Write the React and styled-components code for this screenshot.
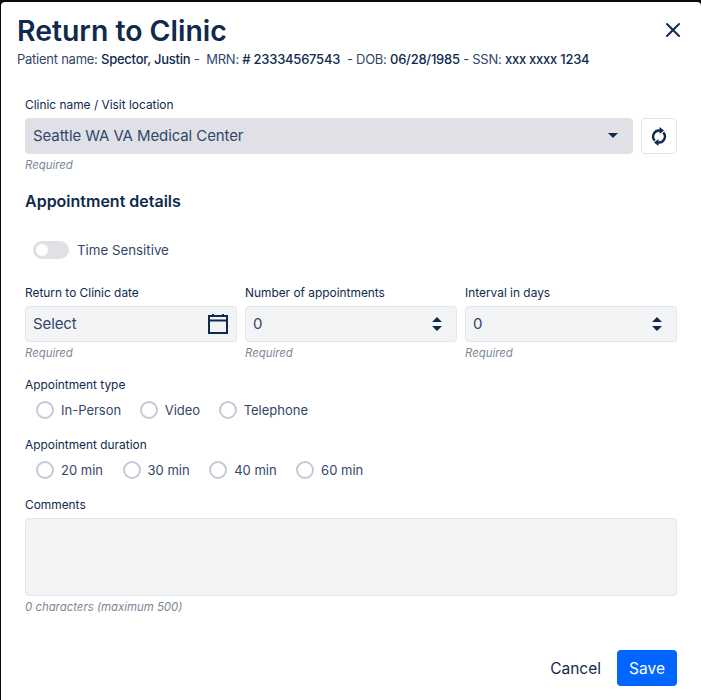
import styled, { createGlobalStyle } from 'styled-components';
import { X } from 'lucide-react';

const colors = {
  navy: '#0f2a4d',
  text: '#33466a',
  muted: '#7b8798',
  field: '#f3f4f6',
  fieldDark: '#dfe1e6',
  border: '#e3e5e9',
  radio: '#c3c9d5',
  blue: '#0066ff',
};

const font = '"Inter", "Liberation Sans", sans-serif';

const GlobalStyle = createGlobalStyle`
  html, body {
    margin: 0;
    padding: 0;
    background: #0a0a0a;
  }
  * {
    box-sizing: border-box;
  }
`;

const Modal = styled.div`
  width: 700px;
  height: 698px;
  margin: 2px 0 0 1px;
  background: #fff;
  border-radius: 4px 4px 0 0;
  padding: 0 24px;
  display: flex;
  flex-direction: column;
  font-family: ${font};
  color: ${colors.text};
  overflow: hidden;
`;

const TitleRow = styled.div`
  display: flex;
  justify-content: space-between;
  align-items: center;
  margin: 12px 0 0 -8px;
  height: 34px;
`;

const Title = styled.h1`
  margin: 0;
  font-size: 28.4px;
  line-height: 34px;
  font-weight: 600;
  color: ${colors.navy};
`;

const CloseButton = styled.button`
  display: flex;
  border: none;
  background: none;
  padding: 0;
  margin: -2px -8px 0 0;
  color: ${colors.navy};
`;

const PatientLine = styled.p`
  margin: 1px 0 0 -8px;
  font-size: 13px;
  line-height: 20px;
  letter-spacing: -0.25px;
  color: ${colors.text};
  white-space: pre;

  b {
    font-weight: 500;
    color: ${colors.navy};
  }
`;

const Label = styled.label`
  display: block;
  font-size: 11.9px;
  line-height: 16px;
  color: ${colors.navy};
  margin-bottom: 5px;
`;

const Hint = styled.div`
  font-size: 11.4px;
  font-style: italic;
  line-height: 14px;
  margin-top: 4px;
  color: ${colors.muted};
`;

const ClinicBlock = styled.div`
  margin-top: 28px;
`;

const ClinicRow = styled.div`
  display: flex;
  gap: 8px;
`;

const Field = styled.div`
  flex: 1;
  height: 36px;
  display: flex;
  align-items: center;
  justify-content: space-between;
  padding: 0 7px 1px;
  font-size: 15px;
  letter-spacing: -0.1px;
  border-radius: 4px;
  color: ${colors.text};
  background: ${(p) => (p.$dark ? colors.fieldDark : colors.field)};
  border: 1px solid ${(p) => (p.$dark ? colors.fieldDark : colors.border)};
`;

const ArrowSvg = styled.svg`
  margin-right: 7px;
`;

const RefreshButton = styled.button`
  width: 36px;
  height: 36px;
  padding: 0;
  display: flex;
  align-items: center;
  justify-content: center;
  background: #fff;
  border: 1px solid ${colors.border};
  border-radius: 4px;
`;

const Heading = styled.h2`
  margin: 19px 0 0;
  font-size: 16px;
  line-height: 21px;
  font-weight: 600;
  color: ${colors.navy};
`;

const ToggleRow = styled.div`
  display: flex;
  align-items: center;
  gap: 8px;
  margin: 29px 0 0 8px;
  font-size: 13.3px;
  line-height: 18px;
`;

const Toggle = styled.span`
  width: 36px;
  height: 18px;
  border-radius: 9px;
  background: ${colors.fieldDark};
  display: flex;
  align-items: center;
  padding-left: 3px;

  &::before {
    content: '';
    width: 12px;
    height: 12px;
    border-radius: 50%;
    background: #fff;
  }
`;

const Columns = styled.div`
  display: grid;
  grid-template-columns: repeat(3, 1fr);
  gap: 8px;
  margin-top: 26px;
`;

const Group = styled.div`
  margin-top: 17px;
`;

const RadioRow = styled.div`
  display: flex;
  gap: ${(p) => p.$gap}px;
  height: 20px;
  margin: 7px 0 0 11px;
`;

const RadioItem = styled.span`
  display: flex;
  align-items: center;
  gap: 7px;
  font-size: 13px;
  color: ${colors.text};
`;

const RadioCircle = styled.span`
  width: 18px;
  height: 18px;
  border-radius: 50%;
  background: #fff;
  border: 2px solid ${colors.radio};
`;

const TextArea = styled.div`
  height: 78px;
  background: ${colors.field};
  border: 1px solid ${colors.border};
  border-radius: 4px;
`;

const Footer = styled.div`
  display: flex;
  justify-content: flex-end;
  align-items: center;
  gap: 16px;
  margin-top: 36px;
`;

const CancelButton = styled.button`
  border: none;
  background: none;
  padding: 0;
  font-family: ${font};
  font-size: 15.5px;
  color: ${colors.navy};
`;

const SaveButton = styled.button`
  width: 60px;
  height: 36px;
  border: none;
  border-radius: 4px;
  background: ${colors.blue};
  color: #fff;
  font-family: ${font};
  font-size: 15.5px;
`;

function Caret() {
  return (
    <ArrowSvg width="10" height="5" viewBox="0 0 10 5">
      <path d="M0 0h10L5 5z" fill={colors.navy} />
    </ArrowSvg>
  );
}

function Stepper() {
  return (
    <ArrowSvg width="10" height="14" viewBox="0 0 10 14">
      <path d="M5 0l5 5H0zM0 9h10l-5 5z" fill={colors.navy} />
    </ArrowSvg>
  );
}

function CalendarIcon() {
  return (
    <svg width="22" height="22" viewBox="0 0 22 22" fill="none" stroke={colors.navy} strokeWidth="2">
      <rect x="2" y="3" width="18" height="17" />
      <path d="M2 7.500h18M6 1v3M16 1v3" />
    </svg>
  );
}

function RefreshIcon() {
  return (
    <svg width="16" height="21" viewBox="0 0 16 21" fill="none">
      <path d="M3.800 14.700A6 6 0 0 1 9 4.600" stroke={colors.navy} strokeWidth="2.400" />
      <path d="M12.200 6.300A6 6 0 0 1 7 16.400" stroke={colors.navy} strokeWidth="2.400" />
      <path d="M8.500 1L13 4.500L8.500 8zM7.500 13L3 16.500L7.500 20z" fill={colors.navy} />
    </svg>
  );
}

function Radios({ options, gap }) {
  return (
    <RadioRow $gap={gap}>
      {options.map((option) => (
        <RadioItem key={option}>
          <RadioCircle />
          {option}
        </RadioItem>
      ))}
    </RadioRow>
  );
}

export default function App() {
  return (
    <>
      <GlobalStyle />
      <Modal>
        <TitleRow>
          <Title>Return to Clinic</Title>
          <CloseButton>
            <X size={24} />
          </CloseButton>
        </TitleRow>
        <PatientLine>
          Patient name: <b>Spector, Justin</b> -  MRN: <b># 23334567543</b>  - DOB: <b>06/28/1985</b> - SSN: <b>xxx xxxx 1234</b>
        </PatientLine>

        <ClinicBlock>
          <Label>Clinic name / Visit location</Label>
          <ClinicRow>
            <Field $dark>
              Seattle WA VA Medical Center
              <Caret />
            </Field>
            <RefreshButton>
              <RefreshIcon />
            </RefreshButton>
          </ClinicRow>
          <Hint>Required</Hint>
        </ClinicBlock>

        <Heading>Appointment details</Heading>

        <ToggleRow>
          <Toggle />
          Time Sensitive
        </ToggleRow>

        <Columns>
          <div>
            <Label>Return to Clinic date</Label>
            <Field>
              Select
              <CalendarIcon />
            </Field>
            <Hint>Required</Hint>
          </div>
          <div>
            <Label>Number of appointments</Label>
            <Field>
              0
              <Stepper />
            </Field>
            <Hint>Required</Hint>
          </div>
          <div>
            <Label>Interval in days</Label>
            <Field>
              0
              <Stepper />
            </Field>
            <Hint>Required</Hint>
          </div>
        </Columns>

        <Group>
          <Label>Appointment type</Label>
          <Radios gap={18.5} options={['In-Person', 'Video', 'Telephone']} />
        </Group>

        <Group>
          <Label>Appointment duration</Label>
          <Radios gap={19.5} options={['20 min', '30 min', '40 min', '60 min']} />
        </Group>

        <Group>
          <Label>Comments</Label>
          <TextArea />
          <Hint>0 characters (maximum 500)</Hint>
        </Group>

        <Footer>
          <CancelButton>Cancel</CancelButton>
          <SaveButton>Save</SaveButton>
        </Footer>
      </Modal>
    </>
  );
}
